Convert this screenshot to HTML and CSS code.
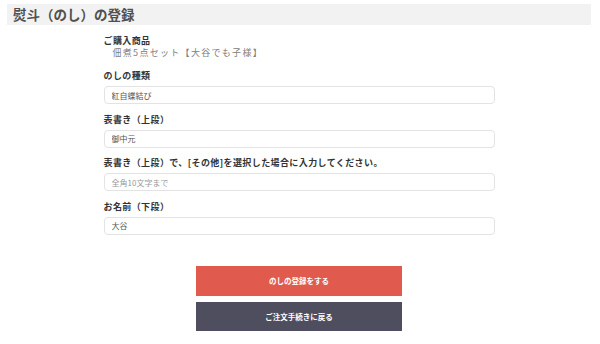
FILE: index.html
```html
<!DOCTYPE html>
<html lang="ja">

<head>
  <title>熨斗（のし）の登録</title>
  <meta charset="UTF-8">
  <meta name="viewport" content="width=device-width, initial-scale=1.0">
  <link rel="stylesheet" href="styles.css">
</head>

<body>

<div class="page">
  <h1 class="page-title">熨斗（のし）の登録</h1>

  <form class="noshi-form">
    <div class="item">
      <div class="label">ご購入商品</div>
      <div class="product">佃煮5点セット【大谷でも子様】</div>
    </div>

    <div class="field">
      <label class="label" for="kind">のしの種類</label>
      <input class="input" id="kind" type="text" value="紅自蝶結び">
    </div>

    <div class="field">
      <label class="label" for="upper">表書き（上段）</label>
      <input class="input" id="upper" type="text" value="御中元">
    </div>

    <div class="field">
      <label class="label" for="other">表書き（上段）で、[その他]を選択した場合に入力してください。</label>
      <input class="input" id="other" type="text" placeholder="全角10文字まで">
    </div>

    <div class="field">
      <label class="label" for="lower">お名前（下段）</label>
      <input class="input" id="lower" type="text" value="大谷">
    </div>
  </form>

  <div class="actions">
    <button class="btn btn-submit" type="button">のしの登録をする</button>
    <button class="btn btn-back" type="button">ご注文手続きに戻る</button>
  </div>
</div>

</body>

</html>
```

FILE: styles.css
```css
body {
  margin: 0;
  font-family: "Noto Sans CJK JP", "Noto Sans", sans-serif;
  color: #333;
  background: #fff;
  text-spacing-trim: space-all;
}

.page {
  margin: 0 9px 0 7px;
  padding-top: 4px;
}

.page-title {
  margin: 0;
  height: 21px;
  line-height: 21px;
  padding-left: 6px;
  background: #f2f2f2;
  font-size: 13.5px;
  font-weight: bold;
  color: #505050;
}

.noshi-form {
  width: 391px;
  margin: 10px auto 0;
}

.item {
  margin-bottom: 12px;
}

.label {
  display: block;
  height: 12px;
  line-height: 12px;
  font-size: 9px;
  font-weight: bold;
  letter-spacing: 0.4px;
  color: #333;
  white-space: nowrap;
}

.product {
  padding-left: 9px;
  line-height: 11px;
  font-size: 9px;
  letter-spacing: 1.3px;
  color: #808080;
}

.field {
  margin-bottom: 9.5px;
}

.field .label {
  margin-bottom: 4px;
}

.input {
  display: block;
  width: 100%;
  height: 18px;
  box-sizing: border-box;
  padding: 0 7px;
  border: 1px solid #e3e3e3;
  border-radius: 4px;
  font-family: inherit;
  font-size: 8px;
  color: #555;
  outline: none;
}

.input::placeholder {
  color: #999;
}

.actions {
  display: flex;
  flex-direction: column;
  align-items: center;
  gap: 6px;
  margin-top: 31px;
}

.btn {
  width: 206px;
  border: none;
  font-family: inherit;
  font-size: 7.5px;
  font-weight: bold;
  color: #fff;
  cursor: pointer;
}

.btn-submit {
  height: 30px;
  background: #e05a4e;
}

.btn-back {
  height: 29px;
  background: #4f4e5e;
}
```
